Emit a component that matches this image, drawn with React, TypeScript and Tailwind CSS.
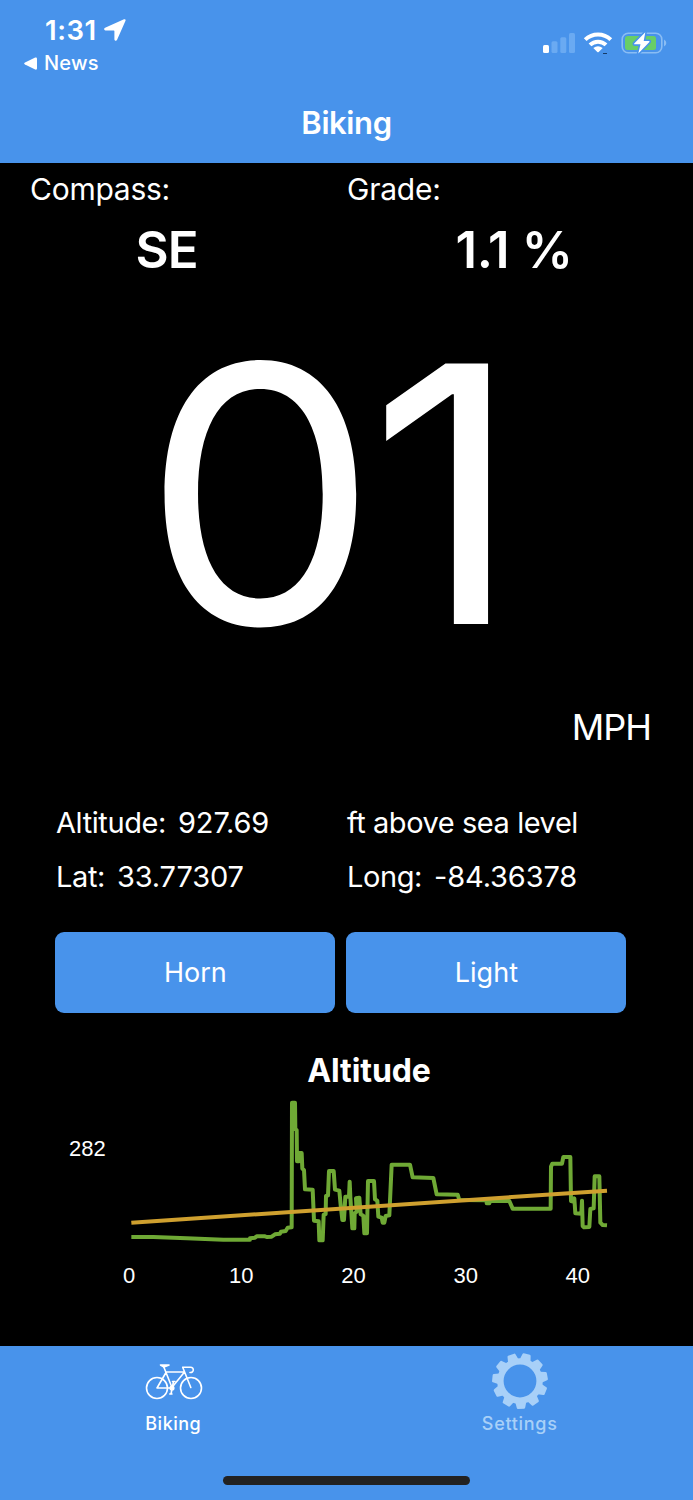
import { useState } from "react";

const TEETH = Array.from({ length: 11 }, (_, i) => 14.2 + (i * 360) / 11);

const X_LABELS = ["0", "10", "20", "30", "40"];

// Altitude samples, drawn as a step-like line
const ALTITUDE_PATH =
  "M34 441L100 441L200 445L310 449L390 449L390 445L405 443L410 439L435 439L440 441L455 440L465 433L480 431L483 425L497 423L503 413L515 412L516 38L525 38L526 118L530 120L531 214L536 214L538 189L545 189L547 236L552 240L555 298L578 299L582 392L596 394L598 451L608 451L611 374L617 372L618 318L624 316L627 243L641 243L645 299L658 302L662 345L667 390L672 390L676 320L687 320L689 275L691 320L697 415L703 415L704 370L710 365L708 325L718 323L722 373L730 377L733 430L741 430L744 273L762 273L765 328L772 332L775 380L785 383L788 398L793 398L797 378L808 376L815 224L870 224L878 262L940 264L950 313L1013 314L1018 330L1100 331L1100 340L1108 340L1110 332L1168 333L1178 356L1292 356L1293 230L1297 221L1326 221L1330 201L1351 201L1353 333L1360 335L1363 325L1366 370L1384 371L1386 332L1388 408L1392 412L1408 411L1411 357L1421 355L1424 259L1438 259L1441 398L1448 405L1461 406";

function StatusBar() {
  return (
    <div className="flex h-[82px] justify-between">
      <div>
        <div className="flex h-[40px] items-start pl-[45px] pt-[14px]">
          <span className="w-[59px] text-[27.5px] font-semibold leading-[32px] tracking-[0.5px]">1:31</span>
          <svg className="mt-[5px]" width="22" height="22" viewBox="0 0 22 22" fill="#fff">
            <path d="M20 .3 1.1 8.7C-.4 9.4 0 11.500 1.500 11.500H9.800Q10.400 11.500 10.400 12.100V20.200C10.400 22 12.500 22.200 13.100 20.700L21.500 1.800C22 .7 21 -.1 20 .3Z" />
          </svg>
        </div>
        <div className="flex h-[46px] items-center pl-[24px]">
          <svg width="13" height="13" viewBox="0 0 13 13" fill="#fff">
            <path d="M11.200.5Q13 0 13 1.500V11.500Q13 13 11.200 12.500L1 7.500Q-.7 6.500 1 5.500Z" />
          </svg>
          <span className="ml-[7px] text-[20px] font-medium tracking-[0.2px]">News</span>
        </div>
      </div>
      <svg className="mr-[25px] mt-[30px]" width="126" height="28" viewBox="0 0 126 28">
        <rect x="1" y="15" width="6" height="8" rx="1.500" fill="#fff" />
        <g fill="#6aaaf2">
          <rect x="9.500" y="11.300" width="6" height="11.700" rx="1.500" />
          <rect x="18.300" y="7.200" width="6" height="15.800" rx="1.500" />
          <rect x="27" y="3" width="6" height="20" rx="1.500" />
        </g>
        <g fill="none" stroke="#fff" strokeWidth="4">
          <path d="M43.200 9.600A18.500 18.500 0 0 1 68.800 9.600" />
          <path d="M48 14.900A11.500 11.500 0 0 1 64 14.900" />
        </g>
        <path d="M51.300 18Q56 14.500 60.700 18L56.700 22Q56 22.700 55.300 22Z" fill="#fff" />
        <rect x="61" y="23" width="4" height="1" fill="#173b66" />
        <rect x="80.200" y="3.200" width="39.600" height="19.600" rx="6" fill="none" stroke="#8abdf4" strokeWidth="1.600" />
        <path d="M122 9.500Q124.300 10.500 124.300 13T122 16.500Z" fill="#8abdf4" />
        <rect x="83" y="6" width="31" height="14" rx="2.500" fill="#68ce67" />
        <path
          d="M103.300 2.300 92.200 13.400Q91.800 14.300 92.800 14.300H98.500L96.300 23.500 107.400 11.900Q108 11 106.800 11H101.700Z"
          fill="#fff"
          stroke="#4893eb"
          strokeWidth="3.200"
          paintOrder="stroke"
          strokeLinejoin="round"
        />
      </svg>
    </div>
  );
}

function BikeIcon() {
  return (
    <svg className="ml-px" width="58" height="40" viewBox="0 0 58 40" fill="none" stroke="#fff" strokeWidth="1.600" strokeLinecap="round" strokeLinejoin="round">
      <circle cx="12" cy="24" r="10.500" />
      <circle cx="46" cy="24" r="10.500" />
      <path d="M12 24 21 8.500M18.800 3 27 23.500M12 24H26.500L39.500 8H21M37.800 3.500 45.800 23.500" />
      <path d="M37.800 3.200H45.500C49.300 3.200 49.300 9 45 8.500" />
      <path d="M15.500 1H24L19 3Z" fill="#fff" />
      <circle cx="27" cy="24" r="1.800" fill="#fff" />
      <path d="M28.500 17.500 26 30M27.500 17.500H30M24.800 30H27" />
    </svg>
  );
}

function GearIcon() {
  return (
    <svg width="58" height="58" viewBox="-29 -29 58 58" fill="#a8d0f8">
      <circle r="19.600" fill="none" stroke="#a8d0f8" strokeWidth="6.400" />
      {TEETH.map((angle) => (
        <path key={angle} d="M-5.400 -21.500 -4.200 -26.800Q-4 -27.700 -3.100 -27.800H3.100Q4 -27.700 4.200 -26.800L5.400 -21.500Z" transform={`rotate(${angle})`} />
      ))}
    </svg>
  );
}

function Reading({ label, value }: { label: string; value: string }) {
  return (
    <div className="flex gap-[12px]">
      <span className="tracking-[-0.4px]">{label}</span>
      <span className="tracking-[-0.15px]">{value}</span>
    </div>
  );
}

function AltitudeChart() {
  return (
    <div className="pt-[38px]">
      <h2 className="pl-[45px] text-center text-[32px] font-bold leading-[40px] tracking-[-0.1px]">Altitude</h2>
      <div className="flex">
        <div className="w-[120px] pl-[69px] pt-[36px] font-['Liberation_Sans',sans-serif] text-[22px] leading-[44px]">282</div>
        <svg className="-mt-px" width="500" height="166" viewBox="0 0 1500 498" fill="none">
          <path d={ALTITUDE_PATH} stroke="#6fa935" strokeWidth="12" strokeLinejoin="round" />
          <path d="M34 398 1461 302" stroke="#cfa02f" strokeWidth="12" />
        </svg>
      </div>
      <div className="flex pl-[73px] font-['Liberation_Sans',sans-serif] text-[22px] leading-[40px]">
        {X_LABELS.map((label) => (
          <span key={label} className="w-[112.2px] text-center">{label}</span>
        ))}
      </div>
    </div>
  );
}

export default function App() {
  const [tab, setTab] = useState("biking");

  return (
    <div className="flex h-[1500px] w-[693px] flex-col overflow-hidden bg-black font-['Inter',sans-serif] text-white">
      <header className="h-[163px] bg-[#4893eb]">
        <StatusBar />
        <h1 className="text-center text-[31px] font-semibold leading-[81px] tracking-[-0.4px]">Biking</h1>
      </header>

      <main className="flex h-[1183px] flex-col">
        <div className="grid h-[122px] grid-cols-[317px_317px] pl-[30px]">
          <div>
            <div className="pt-[6px] text-[30px] leading-[40px] tracking-[-0.25px]">Compass:</div>
            <div className="pr-[44px] pt-px text-center text-[51px] font-semibold leading-[80px] tracking-[-1px]">SE</div>
          </div>
          <div>
            <div className="pt-[6px] text-[30px] leading-[40px] tracking-[-0.25px]">Grade:</div>
            <div className="pl-[17px] pt-px text-center text-[51px] font-semibold leading-[80px] tracking-[-0.4px]">1.1 %</div>
          </div>
        </div>

        <div className="h-[416px] origin-left scale-x-[1.046] pl-[136px] pt-px text-[358px] leading-[416px] tracking-[-9.4px]">01</div>
        <div className="h-[94px] pr-[42px] text-right text-[36px] leading-[52px] tracking-[-1px]">MPH</div>

        <div className="grid grid-cols-[291px_291px] pl-[56px] pt-px text-[29px] leading-[54px]">
          <Reading label="Altitude:" value="927.69" />
          <div className="tracking-[-0.45px]">ft above sea level</div>
          <Reading label="Lat:" value="33.77307" />
          <Reading label="Long:" value="-84.36378" />
        </div>

        <div className="mt-[27.5px] grid grid-cols-2 gap-[11px] pl-[55.4px] pr-[66.6px] text-[27px]">
          <button type="button" className="h-[81px] rounded-[9px] bg-[#4893eb] pt-[2px]">Horn</button>
          <button type="button" className="h-[81px] rounded-[9px] bg-[#4893eb] pt-[2px]">Light</button>
        </div>

        <AltitudeChart />
      </main>

      <nav className="h-[154px] bg-[#4893eb] text-[18px] font-medium">
        <div className="grid h-[130px] grid-cols-2">
          <button type="button" onClick={() => setTab("biking")} aria-pressed={tab === "biking"} className="flex flex-col items-center pt-[18px]">
            <BikeIcon />
            <span className="mt-[7px] leading-[26px] tracking-[0.5px]">Biking</span>
          </button>
          <button type="button" onClick={() => setTab("settings")} aria-pressed={tab === "settings"} className="flex flex-col items-center pt-[6px] text-[#a8d0f8]">
            <GearIcon />
            <span className="mt-px leading-[26px] tracking-[0.7px]">Settings</span>
          </button>
        </div>
        <div className="mx-auto h-[9px] w-[247px] rounded-full bg-[#222]" />
      </nav>
    </div>
  );
}
